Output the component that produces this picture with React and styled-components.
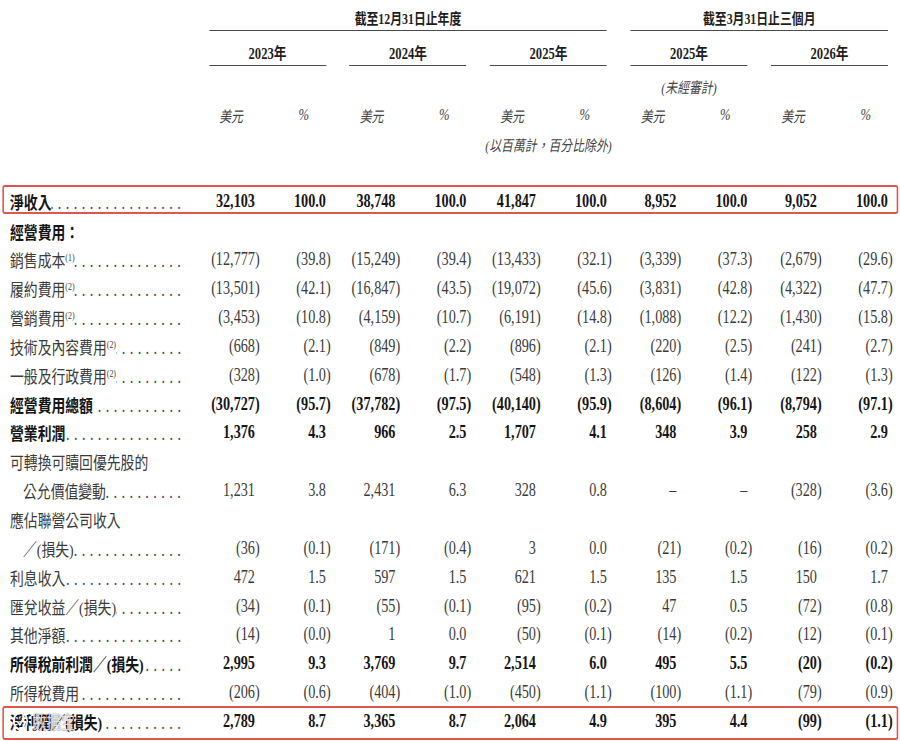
import React from 'react'
import styled, { createGlobalStyle } from 'styled-components'

// the printed table uses a condensed face, so the whole sheet is squeezed horizontally
const K = 0.79
const u = n => `${(n / K).toFixed(2)}px`

const GlobalStyle = createGlobalStyle`
	html, body {
		margin: 0;
		padding: 0;
		background: #fff;
	}
	body {
		overflow: hidden;
	}
`

const Sheet = styled.div`
	position: relative;
	width: ${u(900)};
	height: 741px;
	transform: scaleX(${K});
	transform-origin: 0 0;
	font-family: 'Liberation Serif', 'Noto Sans CJK TC', serif;
	color: #3b3b3b;
`

const HeadRow = styled.div`
	display: flex;
	gap: ${u(23.5)};
	padding-left: ${u(209)};
	height: ${props => props.h}px;
	margin-top: ${props => props.mt || 0}px;
	font-size: 15px;
`

const Banner = styled.div`
	width: ${props => u(props.wide ? 398 : 257.5)};
	box-sizing: border-box;
	border-bottom: 1.4px solid #4a4a4a;
	display: flex;
	align-items: center;
	justify-content: center;
	padding-top: 4px;
	font-weight: 700;
	color: #1e1e1e;
	white-space: nowrap;
`

const Year = styled.div`
	width: ${u(117)};
	box-sizing: border-box;
	border-bottom: 1.4px solid #4a4a4a;
	display: flex;
	align-items: center;
	justify-content: center;
	padding-top: 7px;
	font-size: 16px;
	font-weight: 700;
	color: #1e1e1e;
`

const Note = styled.div`
	width: ${u(117)};
	display: flex;
	align-items: center;
	justify-content: center;
	font-style: italic;
	white-space: nowrap;
	color: #444;
`

const UnitGroup = styled.div`
	width: ${u(117)};
	display: grid;
	grid-template-columns: ${u(46)} ${u(71)};
	align-items: center;
	text-align: right;
	font-style: italic;
	color: #444;
`

const Unit = styled.span`
	padding-right: ${props => u(props.pr)};
	font-size: ${props => props.size || 15}px;
`

const Frame = styled.div`
	margin: ${props => props.mt}px ${u(2)} ${props => props.mb}px;
	height: ${props => props.h}px;
	box-sizing: border-box;
	border: 2px solid #e2554e;
	border-radius: 3px;
	display: flex;
	align-items: center;
	padding-top: ${props => props.pt || 0}px;
	padding-bottom: ${props => props.pb || 0}px;
`

const Row = styled.div`
	display: flex;
	align-items: center;
	gap: ${u(23.5)};
	height: 28.85px;
	flex: 1;
	font-size: 18px;
	font-weight: ${props => (props.bold ? 700 : 400)};
	color: ${props => (props.bold ? '#161616' : '#3b3b3b')};
	${props => props.inFrame && `margin: 0 calc(-${u(2)} - 2px);`}
`

const Label = styled.div`
	width: ${u(185.5)};
	box-sizing: border-box;
	padding-left: ${props => u(props.indent ? 23 : 10)};
	display: flex;
	align-items: baseline;
	white-space: nowrap;
	font-size: 17.5px;
`

const Leader = styled.span`
	flex: 1;
	min-width: 0;
	overflow: hidden;
	direction: rtl;
	padding-left: ${u(4)};
	letter-spacing: ${u(4.4)};
	font-size: 18px;
	font-weight: 400;
	color: #4a4a4a;
`

const Sup = styled.span`
	font-size: 10px;
	font-weight: 400;
	vertical-align: 6px;
	line-height: 0;
`

const Group = styled.div`
	width: ${u(117)};
	display: grid;
	grid-template-columns: ${u(46)} ${u(71)};
	text-align: right;
	white-space: nowrap;
`

const Hang = styled.span`
	margin-right: -0.333em;
`

const Watermark = styled.div`
	position: absolute;
	left: ${u(12)};
	top: 708px;
	display: flex;
	align-items: center;
	gap: ${u(3)};
	font-family: 'Noto Sans CJK SC', sans-serif;
	font-size: 18px;
	color: rgba(255, 255, 255, 0.85);
	text-shadow: 0 0 1px rgba(0, 0, 0, 0.6), 0 0 2px rgba(0, 0, 0, 0.3);
	pointer-events: none;
`

const DOTS = '.'.repeat(40)

const rows = [
	{ key: 'rev', label: '淨收入', bold: true, frame: 'top', v: ['32,103', '100.0', '38,748', '100.0', '41,847', '100.0', '8,952', '100.0', '9,052', '100.0'] },
	{ key: 'opex', label: '經營費用：', bold: true },
	{ key: 'cos', label: '銷售成本', sup: '(1)', v: ['(12,777)', '(39.8)', '(15,249)', '(39.4)', '(13,433)', '(32.1)', '(3,339)', '(37.3)', '(2,679)', '(29.6)'] },
	{ key: 'ful', label: '履約費用', sup: '(2)', v: ['(13,501)', '(42.1)', '(16,847)', '(43.5)', '(19,072)', '(45.6)', '(3,831)', '(42.8)', '(4,322)', '(47.7)'] },
	{ key: 'mkt', label: '營銷費用', sup: '(2)', v: ['(3,453)', '(10.8)', '(4,159)', '(10.7)', '(6,191)', '(14.8)', '(1,088)', '(12.2)', '(1,430)', '(15.8)'] },
	{ key: 'tech', label: '技術及內容費用', sup: '(2)', v: ['(668)', '(2.1)', '(849)', '(2.2)', '(896)', '(2.1)', '(220)', '(2.5)', '(241)', '(2.7)'] },
	{ key: 'ga', label: '一般及行政費用', sup: '(2)', v: ['(328)', '(1.0)', '(678)', '(1.7)', '(548)', '(1.3)', '(126)', '(1.4)', '(122)', '(1.3)'] },
	{ key: 'total', label: '經營費用總額', bold: true, v: ['(30,727)', '(95.7)', '(37,782)', '(97.5)', '(40,140)', '(95.9)', '(8,604)', '(96.1)', '(8,794)', '(97.1)'] },
	{ key: 'op', label: '營業利潤', bold: true, v: ['1,376', '4.3', '966', '2.5', '1,707', '4.1', '348', '3.9', '258', '2.9'] },
	{ key: 'pref', label: '可轉換可贖回優先股的' },
	{ key: 'fv', label: '公允價值變動', indent: true, v: ['1,231', '3.8', '2,431', '6.3', '328', '0.8', '–', '–', '(328)', '(3.6)'] },
	{ key: 'assoc', label: '應佔聯營公司收入' },
	{ key: 'loss', label: '／(損失)', indent: true, v: ['(36)', '(0.1)', '(171)', '(0.4)', '3', '0.0', '(21)', '(0.2)', '(16)', '(0.2)'] },
	{ key: 'int', label: '利息收入', v: ['472', '1.5', '597', '1.5', '621', '1.5', '135', '1.5', '150', '1.7'] },
	{ key: 'fx', label: '匯兌收益／(損失)', v: ['(34)', '(0.1)', '(55)', '(0.1)', '(95)', '(0.2)', '47', '0.5', '(72)', '(0.8)'] },
	{ key: 'other', label: '其他淨額', v: ['(14)', '(0.0)', '1', '0.0', '(50)', '(0.1)', '(14)', '(0.2)', '(12)', '(0.1)'] },
	{ key: 'pbt', label: '所得稅前利潤／(損失)', bold: true, v: ['2,995', '9.3', '3,769', '9.7', '2,514', '6.0', '495', '5.5', '(20)', '(0.2)'] },
	{ key: 'tax', label: '所得稅費用', v: ['(206)', '(0.6)', '(404)', '(1.0)', '(450)', '(1.1)', '(100)', '(1.1)', '(79)', '(0.9)'] },
	{ key: 'net', label: '淨利潤／(損失)', bold: true, frame: 'bottom', v: ['2,789', '8.7', '3,365', '8.7', '2,064', '4.9', '395', '4.4', '(99)', '(1.1)'] }
]

const Num = ({ value }) =>
	value.endsWith(')') ? (
		<span>
			{value.slice(0, -1)}
			<Hang>)</Hang>
		</span>
	) : (
		<span>{value}</span>
	)

const TableRow = ({ row, inFrame }) => (
	<Row bold={row.bold} inFrame={inFrame}>
		<Label indent={row.indent}>
			<span>
				{row.label}
				{row.sup && <Sup>{row.sup}</Sup>}
			</span>
			{row.v && <Leader>{DOTS}</Leader>}
		</Label>
		{row.v &&
			[0, 1, 2, 3, 4].map(i => (
				<Group key={i}>
					<Num value={row.v[i * 2]} />
					<Num value={row.v[i * 2 + 1]} />
				</Group>
			))}
	</Row>
)

const frames = {
	top: { mt: -1.9, mb: 3, h: 29, pt: 5 },
	bottom: { mt: -1.45, mb: 0, h: 34, pb: 3 }
}

const App = () => (
	<Sheet>
		<GlobalStyle />
		<HeadRow h={31}>
			<Banner wide>截至12月31日止年度</Banner>
			<Banner>截至3月31日止三個月</Banner>
		</HeadRow>
		<HeadRow h={35}>
			{['2023年', '2024年', '2025年', '2025年', '2026年'].map((y, i) => (
				<Year key={i}>{y}</Year>
			))}
		</HeadRow>
		<HeadRow h={29} mt={5.5}>
			<Note />
			<Note />
			<Note />
			<Note>(未經審計)</Note>
		</HeadRow>
		<HeadRow h={29}>
			{[0, 1, 2, 3, 4].map(i => (
				<UnitGroup key={i}>
					<Unit pr={12}>美元</Unit>
					<Unit pr={17} size={16}>%</Unit>
				</UnitGroup>
			))}
		</HeadRow>
		<HeadRow h={29}>
			<Note />
			<Note />
			<Note>(以百萬計，百分比除外)</Note>
		</HeadRow>
		<div style={{ height: 28 }} />
		{rows.map(row =>
			row.frame ? (
				<Frame key={row.key} {...frames[row.frame]}>
					<TableRow row={row} inFrame />
				</Frame>
			) : (
				<TableRow key={row.key} row={row} />
			)
		)}
		<Watermark>
			<svg width="22" height="22" viewBox="0 0 22 22">
				<circle cx="11" cy="11" r="8.5" fill="none" stroke="rgba(255,255,255,0.9)" strokeWidth="2.2" />
				<path d="M7 11.5l3 3 5-6" fill="none" stroke="rgba(255,255,255,0.9)" strokeWidth="2.2" />
			</svg>
			<span>数据宝</span>
		</Watermark>
	</Sheet>
)

export default App
